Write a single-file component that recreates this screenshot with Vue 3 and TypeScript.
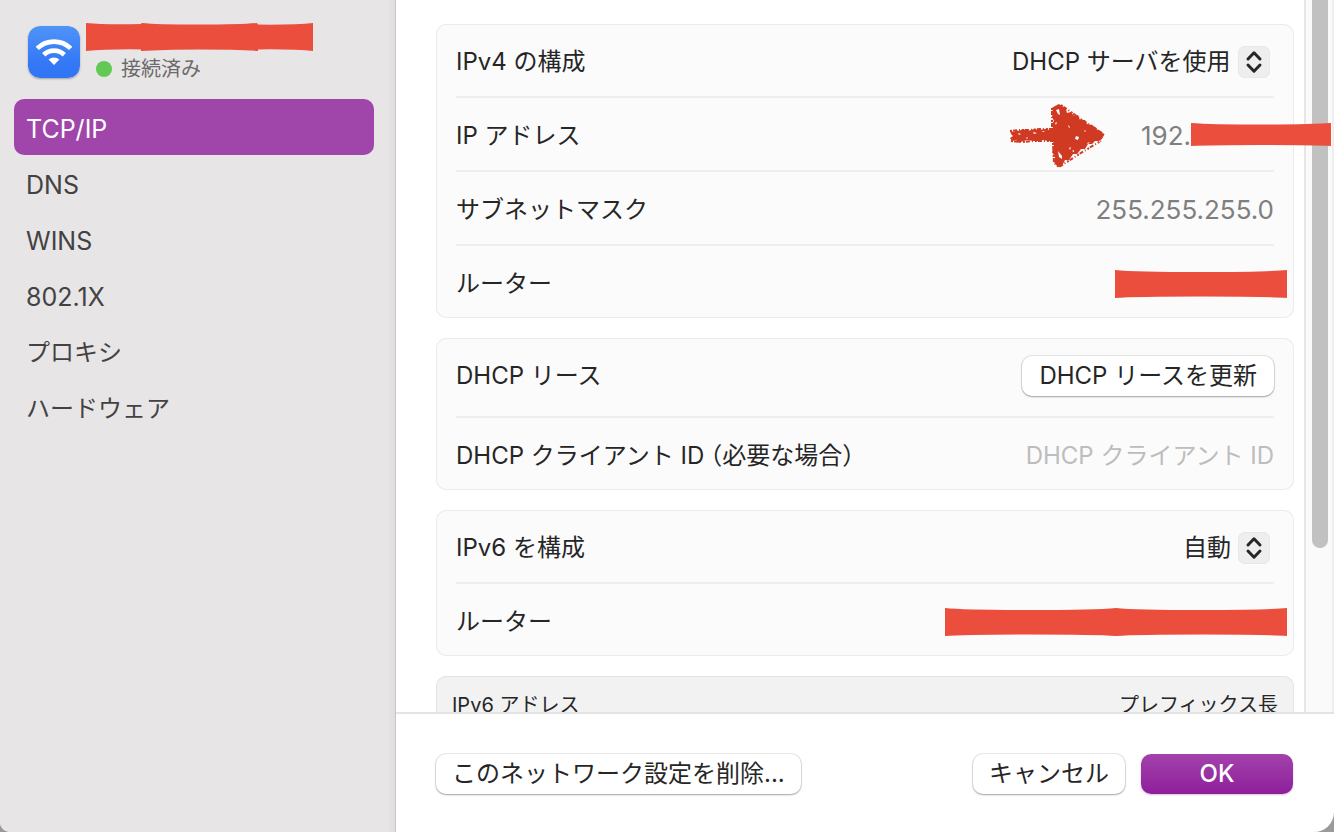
<script setup lang="ts">
import { ref } from 'vue'

interface Tab {
  name: string
  latin: boolean
}

const tabs: Tab[] = [
  { name: 'TCP/IP', latin: true },
  { name: 'DNS', latin: true },
  { name: 'WINS', latin: true },
  { name: '802.1X', latin: true },
  { name: 'プロキシ', latin: false },
  { name: 'ハードウェア', latin: false },
]
const current = ref('TCP/IP')
const ipv4Mode = ref('dhcp')
const ipv6Mode = ref('auto')
const clientId = ref('')
</script>

<template>
  <div class="window">
    <aside class="sidebar">
      <header class="service">
        <svg class="wifi" viewBox="0 0 52 52" aria-hidden="true">
          <defs>
            <linearGradient id="wifi-bg" x1="0" y1="0" x2="0" y2="1">
              <stop offset="0" stop-color="#4f94f8" />
              <stop offset="0.7" stop-color="#3478f6" />
              <stop offset="1" stop-color="#3075f5" />
            </linearGradient>
          </defs>
          <rect width="52" height="52" rx="12" fill="url(#wifi-bg)" />
          <g fill="none" stroke="#fff" stroke-width="4.8">
            <path d="M9.3 22.4 A24 24 0 0 1 42.7 22.4" />
            <path d="M15.7 28.8 A15 15 0 0 1 36.3 28.8" />
          </g>
          <path d="M26 39 L20.6 33.6 A7.7 7.7 0 0 1 31.4 33.6 Z" fill="#fff" />
        </svg>
        <div class="service-text">
          <svg class="redact name-redact" viewBox="0 0 227 28" aria-hidden="true">
            <path d="M0 0 Q20 2 55 1 Q55 0 56 0 Q70 1.6 113 1.6 T171 0 L172 1.6 Q210 2 227 0 V28 Q210 26 172 26.4 V28 Q150 26.4 113 26.4 T55 28 V26.4 Q20 26 0 28 Z" />
          </svg>
          <p class="status"><span class="dot"></span>接続済み</p>
        </div>
      </header>
      <nav class="tabs">
        <button
          v-for="tab in tabs"
          :key="tab.name"
          type="button"
          class="tab"
          :class="{ active: tab.name === current, latin: tab.latin }"
          @click="current = tab.name"
        >{{ tab.name }}</button>
      </nav>
    </aside>

    <main class="main">
      <div class="scroll">
        <div class="pane">
          <section class="card">
            <div class="row">
              <label for="ipv4">IPv4 の構成</label>
              <span class="popup">
                <select id="ipv4" v-model="ipv4Mode">
                  <option value="dhcp">DHCP サーバを使用</option>
                </select>
                <svg class="chevrons" viewBox="0 0 32 32" aria-hidden="true">
                  <path d="M10 13 L16 6.8 L22 13 M10 19 L16 25.2 L22 19" />
                </svg>
              </span>
            </div>
            <div class="row">
              <span>IP アドレス</span>
              <span class="address">
                <svg class="arrow" viewBox="0 0 96 66" aria-hidden="true">
                  <path class="ink" d="M1 28 L5 29 L7 27 L10 28 L14 26 L19 28 L25 26 L30 27 L36 26 L40 27 L44 25 L43 21 L45 18 L43 14 L44 9 L43 5 L46 3 L50 1 L53 3 L57 6 L58 10 L62 9 L65 13 L69 12 L71 17 L76 17 L78 21 L83 22 L87 26 L92 28 L95 32 L93 36 L90 38 L86 38 L83 41 L79 41 L76 46 L72 46 L68 51 L64 51 L60 57 L56 57 L54 61 L50 64 L47 62 L45 59 L46 54 L43 49 L45 43 L44 38 L39 38 L34 37 L29 38 L24 38 L19 37 L14 38 L10 40 L7 37 L3 38 L1 35 L4 33 L2 31 Z" />
                  <path class="rough" d="M1 28 L10 27 L20 27 L31 26 L44 26 M2 38 L13 39 L25 38 L44 38 M43 5 L43 24 M44 40 L45 60 L50 64 L61 57 L75 48 L92 38 M52 2 L62 9 L73 17 L86 25 L95 32" />
                  <path class="speck" d="M47 7 L50 6 L51 12 L49 11 Z M67 33 L70 34 L69 37 L66 36 Z M49 48 L53 53 L53 56 L50 54 Z M24 29 L28 30 L25 31 Z M33 29 L34 28 L36 29 Z M9 30 L12 31 L10 32 Z M78 40 L81 39 L79 41 Z M59 22 L61 24 L60 25 Z M63 48 L65 47 L65 49 Z M46 20 L48 19 L47 22 Z M75 27 L77 28 L76 29 Z M17 35 L19 34 L18 36 Z M60 45 L62 44 L61 47 Z" />
                </svg>
                <span class="value">192.</span>
                <svg class="redact ip-redact" viewBox="0 0 140 23" aria-hidden="true">
                  <path d="M0 0 Q20 1.5 70 1.5 T140 0 V23 Q120 22 70 22 T0 23 Z" />
                </svg>
              </span>
            </div>
            <div class="row">
              <span>サブネットマスク</span>
              <span class="value">255.255.255.0</span>
            </div>
            <div class="row">
              <span>ルーター</span>
              <svg class="redact router-redact" viewBox="0 0 172 28" aria-hidden="true">
                <path d="M0 0 Q20 2 86 2 T172 0 V28 Q152 26.5 86 26.5 T0 28 Z" />
              </svg>
            </div>
          </section>

          <section class="card">
            <div class="row tall">
              <span>DHCP リース</span>
              <button type="button" class="btn wide">DHCP リースを更新</button>
            </div>
            <div class="row">
              <label for="client">DHCP クライアント ID<span class="paren">（必要な場合）</span></label>
              <input id="client" v-model="clientId" type="text" placeholder="DHCP クライアント ID" />
            </div>
          </section>

          <section class="card">
            <div class="row">
              <label for="ipv6">IPv6 を構成</label>
              <span class="popup">
                <select id="ipv6" v-model="ipv6Mode">
                  <option value="auto">自動</option>
                </select>
                <svg class="chevrons" viewBox="0 0 32 32" aria-hidden="true">
                  <path d="M10 13 L16 6.8 L22 13 M10 19 L16 25.2 L22 19" />
                </svg>
              </span>
            </div>
            <div class="row">
              <span>ルーター</span>
              <svg class="redact router6-redact" viewBox="0 0 342 28" aria-hidden="true">
                <path d="M0 0 Q20 2 85 2 T171 0 Q190 2 257 2 T342 0 V28 Q322 26.5 257 26.5 T171 28 Q151 26.5 85 26.5 T0 28 Z" />
              </svg>
            </div>
          </section>

          <table class="card addresses">
            <thead>
              <tr>
                <th scope="col">IPv6 アドレス</th>
                <th scope="col" class="end">プレフィックス長</th>
              </tr>
            </thead>
          </table>
        </div>
        <div class="track"><div class="thumb"></div></div>
      </div>

      <footer class="footer">
        <button type="button" class="btn">このネットワーク設定を削除...</button>
        <span class="spacer"></span>
        <button type="button" class="btn">キャンセル</button>
        <button type="button" class="btn primary">OK</button>
      </footer>
    </main>
  </div>
</template>

<style>
body {
  background: #9b999b;
}
</style>

<style scoped>
.window {
  display: flex;
  height: 100vh;
  overflow: hidden;
  border-radius: 0 0 20px 10px;
  background: #fff;
  color: #262626;
  font-family: Inter, "Noto Sans CJK JP", sans-serif;
  font-size: 24px;
  line-height: 32px;
}

button,
select,
input {
  margin: 0;
  border: 0;
  color: inherit;
  font: inherit;
}

/* Sidebar */
.sidebar {
  box-sizing: border-box;
  flex: 0 0 396px;
  padding: 23px 21px 0 14px;
  border-right: 1px solid #c9c7c9;
  background: linear-gradient(to left, #dfdddf, #e7e5e6 8px);
}

.service {
  display: flex;
  gap: 6px;
  padding-left: 14px;
}

.wifi {
  width: 52px;
  height: 52px;
  margin-top: 3px;
  border-radius: 12px;
  box-shadow: 0 1px 2px rgba(0, 0, 0, 0.3);
}

.redact {
  display: block;
  flex: none;
  fill: #eb4e3d;
}

.name-redact {
  width: 227px;
  height: 28px;
}

.status {
  display: flex;
  align-items: center;
  gap: 9px;
  margin: 4px 0 0 10px;
  color: #6c6a6b;
  font-size: 20px;
  line-height: 28px;
}

.dot {
  width: 16px;
  height: 16px;
  border-radius: 50%;
  background: #62c955;
}

.tabs {
  display: flex;
  flex-direction: column;
  margin-top: 16px;
}

.tab {
  height: 56px;
  padding: 3px 12px 0;
  border-radius: 10px;
  background: none;
  color: #434243;
  text-align: left;
}

.tab.latin {
  font-size: 25px;
}

.tab.active {
  background: #a046aa;
  color: #fff;
}

/* Main column */
.main {
  display: flex;
  flex: 1;
  flex-direction: column;
  min-width: 0;
}

.scroll {
  display: flex;
  flex: 1;
  min-height: 0;
  overflow: hidden;
}

.pane {
  z-index: 1;
  display: flex;
  flex: 1;
  flex-direction: column;
  gap: 20px;
  min-width: 0;
  padding: 24px 10px 0 40px;
}

.track {
  box-sizing: border-box;
  flex: 0 0 30px;
  padding-left: 6px;
  border-right: 2px solid #eeeeee;
  border-left: 2px solid #e6e6e6;
  background: #fafafa;
}

.thumb {
  width: 16px;
  height: 548px;
  border-radius: 0 0 8px 8px;
  background: #c1c1c1;
}

.card {
  flex: none;
  padding: 0 20px;
  border-radius: 10px;
  background: #fbfbfb;
  box-shadow: inset 0 0 0 1px #ebebeb;
}

.row {
  display: flex;
  align-items: center;
  justify-content: space-between;
  height: 69px;
  padding-top: 3px;
}

.row + .row {
  border-top: 2px solid #eeeeee;
}

.row.tall {
  height: 76px;
  padding: 0 0 2px;
}

.value {
  color: #7f7f7f;
  font-size: 26px;
}

.popup {
  position: relative;
  margin-right: 4px;
}

.popup select {
  display: block;
  height: 32px;
  padding: 0 39px 0 0;
  appearance: none;
  background: none;
  outline: none;
}

.chevrons {
  position: absolute;
  top: 0;
  right: 0;
  width: 32px;
  height: 32px;
  border-radius: 7px;
  background: #eeeeee;
  box-shadow: inset 0 0 0 1px #e8e8e8;
  fill: none;
  stroke: #262626;
  stroke-width: 3;
  stroke-linecap: round;
  stroke-linejoin: round;
  pointer-events: none;
}

.address {
  display: flex;
  align-items: center;
  margin-right: -57px;
}

.arrow {
  width: 96px;
  height: 66px;
  margin-right: 36px;
}

.ink {
  fill: #d03a22;
}

.rough {
  fill: none;
  stroke: #d03a22;
  stroke-width: 2;
  stroke-dasharray: 2 1 4 2 1 2;
}

.speck {
  fill: #fbfbfb;
}

.ip-redact {
  width: 140px;
  height: 23px;
  margin-bottom: 3px;
}

.router-redact {
  width: 172px;
  height: 28px;
  margin-right: -13px;
}

.router6-redact {
  width: 342px;
  height: 28px;
  margin-right: -13px;
}

.paren {
  font-feature-settings: "halt";
  margin-left: 6px;
}

.row input {
  flex: 1;
  min-width: 0;
  padding: 0;
  background: none;
  outline: none;
  text-align: right;
}

.row input::placeholder {
  color: #bdbdbd;
  opacity: 1;
}

.addresses {
  width: 100%;
  padding: 12px 16px;
  border-spacing: 0;
  background: #f2f2f2;
  box-shadow: inset 0 0 0 1px #e4e4e4;
  font-size: 20px;
}

.addresses th {
  padding: 1px 0 0;
  font-weight: 400;
  text-align: left;
}

.addresses .end {
  text-align: right;
}

/* Buttons */
.btn {
  height: 40px;
  padding: 0 16px;
  border-radius: 10px;
  background: #fff;
  box-shadow: 0 0 0 1px rgba(0, 0, 0, 0.08), 0 1px 2px rgba(0, 0, 0, 0.3);
  line-height: 36px;
}

.btn.wide {
  padding: 0 17px;
}

.primary {
  width: 152px;
  background: linear-gradient(#a342ac, #8e1f9a);
  box-shadow: 0 1px 2px rgba(142, 31, 154, 0.3);
  color: #fff;
  font-weight: 500;
}

.footer {
  display: flex;
  gap: 16px;
  padding: 40px 41px 38px 40px;
  border-top: 2px solid #e4e4e4;
}

.spacer {
  flex: 1;
}
</style>
